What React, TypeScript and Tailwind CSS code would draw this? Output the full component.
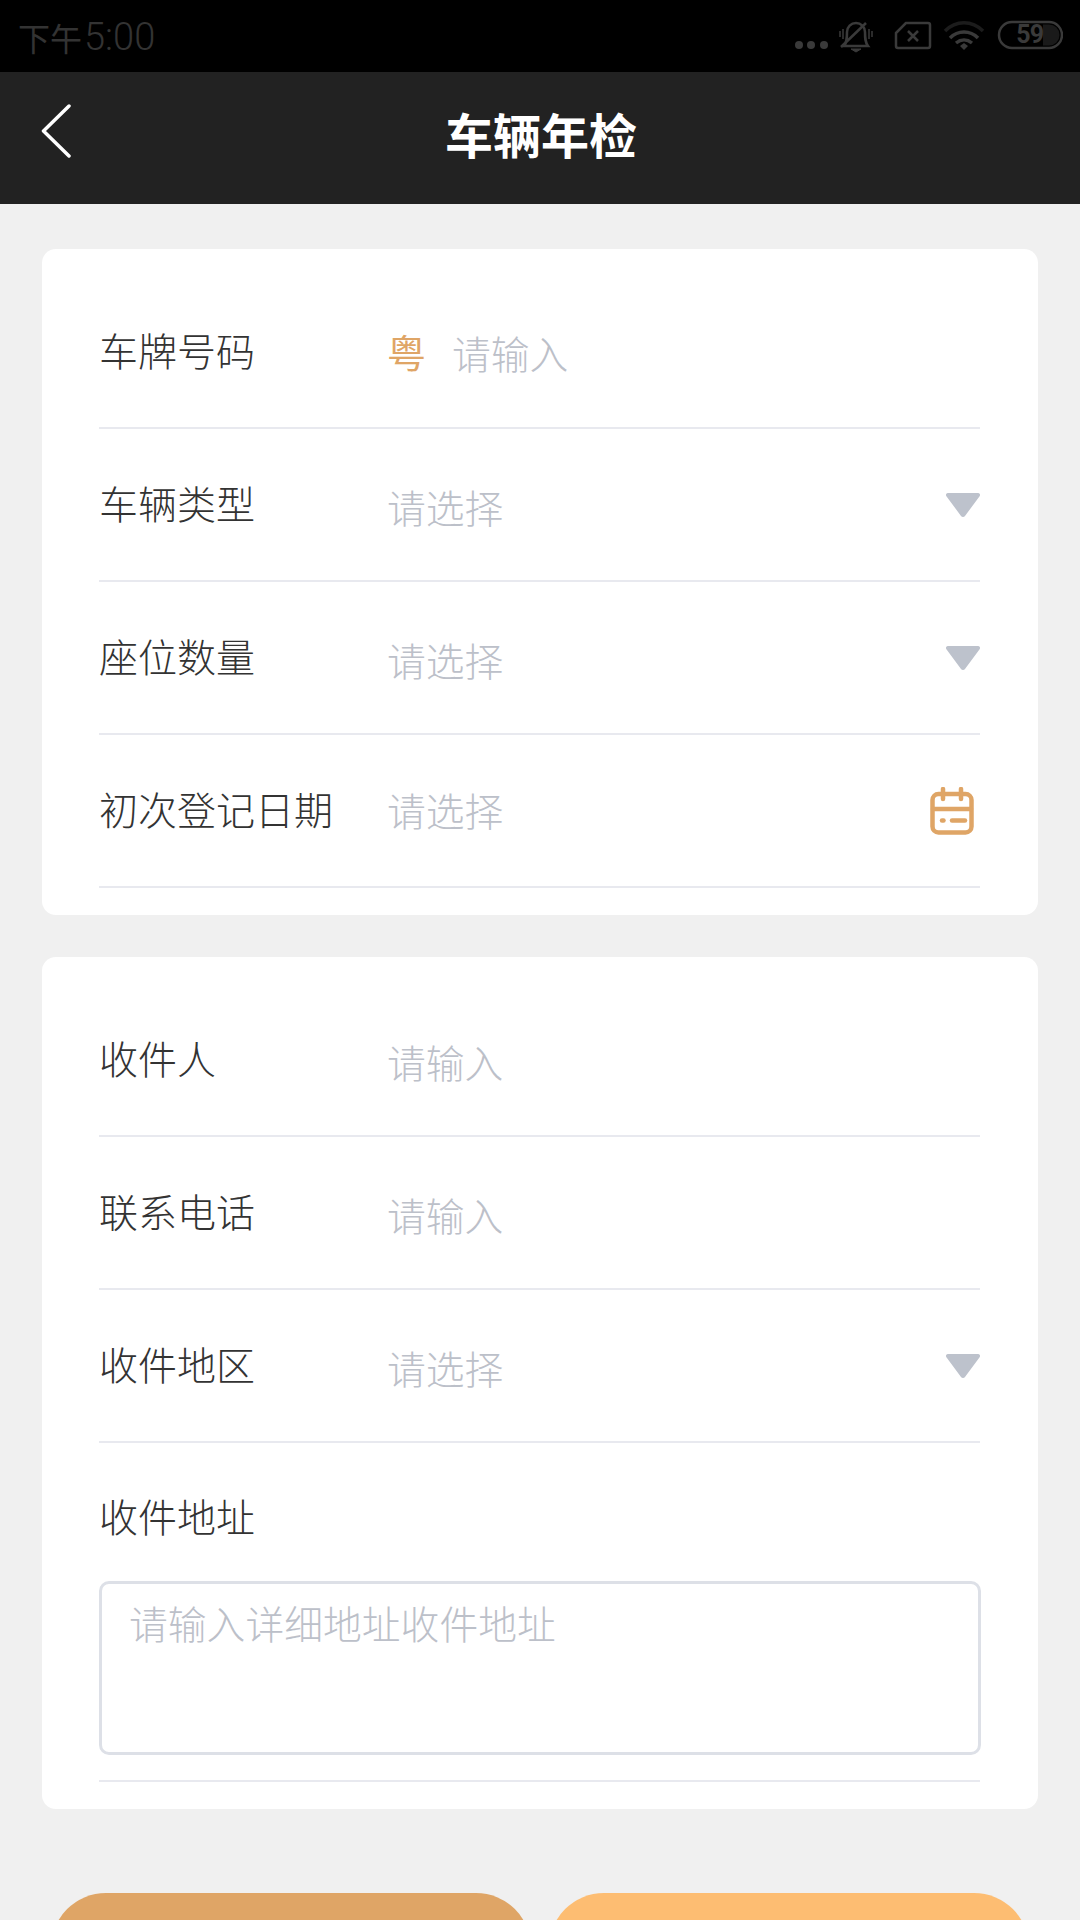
import type { ReactNode } from "react";

const FONT = "font-['Noto_Sans_CJK_SC','Noto_Sans',sans-serif]";

function StatusBar() {
  return (
    <div className="relative h-[72px] bg-black flex items-center pl-[18px] pr-[17px] shrink-0">
      <span className="flex items-center text-[#333333] leading-none mt-[2px]">
        <span className="text-[32px]">下午</span>
        <span className="text-[38px] ml-[2px] font-light font-['Roboto',sans-serif]">5:00</span>
      </span>
      <div className="flex-1" />
      <svg width="273" height="40" viewBox="790 16 273 40" fill="none" stroke="#3a3a3a">
        {/* dots */}
        <circle cx="799" cy="45" r="4" fill="#3a3a3a" stroke="none" />
        <circle cx="811" cy="45" r="4" fill="#3a3a3a" stroke="none" />
        <circle cx="824" cy="45" r="4" fill="#3a3a3a" stroke="none" />
        {/* muted bell */}
        <path d="M844 46c3-4 3-8 3-14 0-5 4-9 9-9s9 4 9 9c0 6 0 10 3 14z" strokeWidth="2.5" />
        <path d="M851 49h10l-5 3z" fill="#3a3a3a" strokeWidth="1" />
        <path d="M841 47L866 23" strokeWidth="2.5" />
        <path d="M840 31v6M843 29v10M869 29v10M872 31v6" strokeWidth="1.5" />
        {/* sim with x */}
        <path d="M896 33l9-9a2 2 0 0 1 1-1h22a2 2 0 0 1 2 2v21a2 2 0 0 1-2 2h-30a2 2 0 0 1-2-2z" strokeWidth="2.5" />
        <path d="M908 31l10 10M918 31l-10 10" strokeWidth="2.5" />
        {/* wifi */}
        <path d="M945 31c11-11 27-11 38 0" strokeWidth="3.5" stroke="#1c1c1c" />
        <path d="M950 38c8-8 20-8 28 0" strokeWidth="3.5" />
        <path d="M956 43c5-4 11-4 16 0" strokeWidth="3.5" />
        <path d="M960 46l4-3 4 3-4 4z" fill="#3a3a3a" stroke="none" />
        {/* battery */}
        <rect x="999" y="22" width="63" height="26" rx="13" strokeWidth="2.5" />
        <path d="M1043 24.5h6a10.5 10.5 0 0 1 0 21h-6z" fill="#1a1a1a" stroke="none" />
      </svg>
      <span className="absolute right-[37px] top-[20px] text-[25px] leading-[30px] font-bold tracking-[-1px] text-[#3a3a3a] font-['Roboto',sans-serif]">
        59
      </span>
    </div>
  );
}

function Header() {
  return (
    <div className="relative h-[132px] bg-[#222222] flex items-center justify-center shrink-0">
      <svg className="absolute left-[39px] top-[32px]" width="34" height="54" viewBox="0 0 34 54" fill="none">
        <path d="M30 2L4.5 27 30 52" stroke="#fff" strokeWidth="3.5" strokeLinecap="round" strokeLinejoin="round" />
      </svg>
      <span className="text-[48px] font-bold text-white leading-none -mt-[10px] ml-[2px]">车辆年检</span>
    </div>
  );
}

function Arrow() {
  return (
    <svg width="34" height="24" viewBox="0 0 34 24">
      <path d="M2 0h30a2 2 0 0 1 1.6 3.2L19 23a2.6 2.6 0 0 1-4 0L.4 3.2A2 2 0 0 1 2 0z" fill="#bdc2cc" />
    </svg>
  );
}

function CalendarIcon() {
  return (
    <svg className="mr-[6px]" width="44" height="48" viewBox="0 0 44 48" fill="none" stroke="#dfa566" strokeWidth="4.5" strokeLinecap="round">
      <rect x="2.5" y="7" width="39" height="38.5" rx="6" />
      <path d="M3 22h38" />
      <path d="M13 2v10M31 2v10" />
      <path d="M12 33.5h1.5" />
      <path d="M22 33.5h13" />
    </svg>
  );
}

function Row({ label, children, right }: { label: string; children: ReactNode; right?: ReactNode }) {
  return (
    <div className="h-[153px] flex items-center border-b-2 border-[#e8e9ef]">
      <span className="w-[288px] text-[39px] leading-none font-light text-[#333333] shrink-0 -mt-[5px]">{label}</span>
      <div className="flex-1 flex items-center mt-[3px]">{children}</div>
      {right}
    </div>
  );
}

function Hint({ children }: { children: ReactNode }) {
  return <span className="text-[38.8px] leading-none font-light text-[#bcc0c9]">{children}</span>;
}

export default function App() {
  return (
    <div className={`${FONT} relative w-[1080px] h-[1920px] overflow-hidden bg-[#f0f0f0] flex flex-col`}>
      <StatusBar />
      <Header />
      <div className="px-[42px] pt-[45px]">
        <div className="bg-white rounded-[14px] pl-[57px] pr-[58px] py-[27px]">
          <Row label="车牌号码">
            <span className="text-[39px] leading-none text-[#dfa566] -mt-[4px]">粤</span>
            <span className="ml-[26px]">
              <Hint>请输入</Hint>
            </span>
          </Row>
          <Row label="车辆类型" right={<Arrow />}>
            <Hint>请选择</Hint>
          </Row>
          <Row label="座位数量" right={<Arrow />}>
            <Hint>请选择</Hint>
          </Row>
          <Row label="初次登记日期" right={<CalendarIcon />}>
            <span className="-mt-[3px]">
              <Hint>请选择</Hint>
            </span>
          </Row>
        </div>
        <div className="mt-[42px] bg-white rounded-[14px] pl-[57px] pr-[58px] py-[27px]">
          <Row label="收件人">
            <Hint>请输入</Hint>
          </Row>
          <Row label="联系电话">
            <Hint>请输入</Hint>
          </Row>
          <Row label="收件地区" right={<Arrow />}>
            <Hint>请选择</Hint>
          </Row>
          <div className="border-b-2 border-[#e8e9ef] pb-[25px]">
            <div className="pt-[53px] text-[39px] leading-none font-light text-[#333333]">收件地址</div>
            <div className="mt-[46px] -mr-[1px] h-[174px] rounded-[10px] border-[3px] border-[#dde0e7] px-[27px] pt-[19px]">
              <Hint>请输入详细地址收件地址</Hint>
            </div>
          </div>
        </div>
        <div className="mt-[84px] mx-[9px] flex gap-[18px]">
          <div className="flex-1 h-[110px] rounded-[55px] bg-[#dfa566]" />
          <div className="flex-1 h-[110px] rounded-[55px] bg-[#fdbd72]" />
        </div>
      </div>
    </div>
  );
}
